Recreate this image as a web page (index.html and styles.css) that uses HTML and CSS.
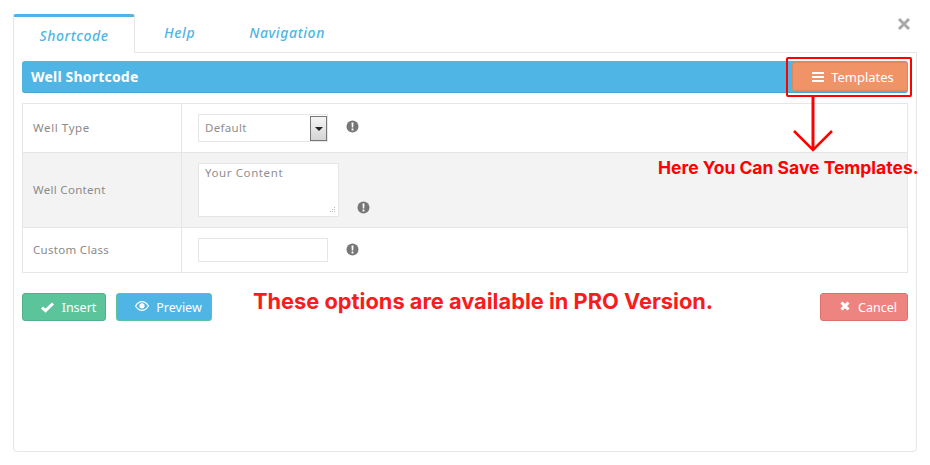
FILE: index.html
```html
<!DOCTYPE html>
<html lang="en">
<head>
<meta charset="utf-8">
<title>Well Shortcode</title>
<link rel="stylesheet" href="styles.css">
</head>
<body>
<div class="modal">
  <nav class="tabs">
    <a class="tab active">Shortcode</a>
    <a class="tab help">Help</a>
    <a class="tab nav">Navigation</a>
  </nav>
  <span class="close" aria-label="Close"><svg width="14" height="14" viewBox="0 0 14 14"><path d="M2 2L12 12M12 2L2 12" stroke="#a9a9a9" stroke-width="3"/></svg></span>
  <section class="panel">
    <header class="bar">
      <h1>Well Shortcode</h1>
      <button class="templates"><svg width="12" height="10" viewBox="0 0 12 10"><path d="M0 0h12v2H0zM0 4h12v2H0zM0 8h12v2H0z" fill="#fff"/></svg>Templates</button>
    </header>
    <div class="form">
      <div class="row r1">
        <label>Well Type</label>
        <div class="field">
          <div class="select"><span>Default</span><i class="arrow"></i></div>
          <svg class="info" width="13" height="13" viewBox="0 0 13 13"><circle cx="6.5" cy="6.5" r="6" fill="#777"/><path d="M5.5 2.5h2l-.3 5h-1.4zM5.6 8.6h1.8v1.8H5.6z" fill="#fff"/></svg>
        </div>
      </div>
      <div class="row r2">
        <label>Well Content</label>
        <div class="field">
          <div class="textarea">Your Content<svg class="grip" width="8" height="8" viewBox="0 0 8 8"><path d="M6 1h1v1H6zM4 3h1v1H4zM6 3h1v1H6zM2 5h1v1H2zM4 5h1v1H4zM6 5h1v1H6z" fill="#bbb"/></svg></div>
          <svg class="info low" width="13" height="13" viewBox="0 0 13 13"><circle cx="6.5" cy="6.5" r="6" fill="#777"/><path d="M5.5 2.5h2l-.3 5h-1.4zM5.6 8.6h1.8v1.8H5.6z" fill="#fff"/></svg>
        </div>
      </div>
      <div class="row r3">
        <label>Custom Class</label>
        <div class="field">
          <div class="input"></div>
          <svg class="info" width="13" height="13" viewBox="0 0 13 13"><circle cx="6.5" cy="6.5" r="6" fill="#777"/><path d="M5.5 2.5h2l-.3 5h-1.4zM5.6 8.6h1.8v1.8H5.6z" fill="#fff"/></svg>
        </div>
      </div>
    </div>
    <footer class="actions">
      <button class="btn insert"><svg width="13" height="11" viewBox="0 0 13 11"><path d="M1 5.500l3.500 3.200L12 1.500" fill="none" stroke="#fff" stroke-width="3"/></svg>Insert</button>
      <button class="btn preview"><svg class="up" width="14" height="10" viewBox="0 0 14 10"><path d="M.5 5C2.500 1.800 4.600.6 7 .6S11.500 1.800 13.500 5C11.500 8.200 9.400 9.400 7 9.400S2.500 8.200.5 5z" fill="none" stroke="#fff" stroke-width="1.200"/><circle cx="7" cy="4.800" r="2.600" fill="#fff"/></svg>Preview</button>
      <button class="btn cancel"><svg class="up" width="10" height="10" viewBox="0 0 10 10"><path d="M1.500 1.500L8.500 8.500M8.500 1.500L1.500 8.500" stroke="#fff" stroke-width="3"/></svg>Cancel</button>
    </footer>
  </section>
  <div class="callout-box"></div>
  <svg class="callout-arrow" width="42" height="58" viewBox="0 0 42 58"><path d="M21 0V54" fill="none" stroke="#f00" stroke-width="3"/><path d="M2 35L21 54L40 35" fill="none" stroke="#f00" stroke-width="2.500"/></svg>
  <p class="note save">Here You Can Save Templates.</p>
  <p class="note pro">These options are available in PRO Version.</p>
</div>
</body>
</html>
```
FILE: styles.css
```css
* { box-sizing: border-box; }
html, body { margin: 0; height: 465px; overflow: hidden; background: #fff; }
body { font-family: "Noto Sans", "DejaVu Sans", sans-serif; color: #8a8a8a; }
.modal { position: relative; width: 930px; height: 465px; padding: 14px 13px 14px; }
.tabs { display: flex; height: 39px; position: relative; z-index: 1; }
.tab { font-family: "Noto Sans", sans-serif; font-style: italic; font-weight: 500; font-size: 14px; letter-spacing: .6px; color: #4fb5e5; }
.tab.active { width: 122px; height: 39px; background: #fff; border: 1px solid #e6e6e6; border-top: 3px solid #4fb5e5; border-bottom: 0; border-radius: 3px 3px 0 0; padding-top: 9px; text-align: center; }
.tab.help { margin-left: 29px; padding-top: 9px; }
.tab.nav { margin-left: 54px; padding-top: 9px; }
.close { position: absolute; left: 897px; top: 17px; line-height: 0; }
.panel { height: 400px; margin-top: -1px; border: 1px solid #e6e6e6; border-radius: 0 0 4px 4px; padding: 8px 8px 0; }
.bar { height: 32px; background: #4fb5e5; border-radius: 3px; display: flex; justify-content: space-between; align-items: center; padding-left: 9px; border-bottom: 1px solid #47a5d2; }
.bar h1 { margin: 0; font-family: "Noto Sans", sans-serif; font-size: 14px; font-weight: 700; letter-spacing: .2px; color: #fff; }
.templates { width: 116px; height: 29px; background: #f09468; border: 1px solid #e2865a; border-radius: 2px; display: flex; align-items: center; justify-content: center; gap: 7px; color: #fff; font-family: "Noto Sans", sans-serif; font-size: 13px; padding: 0 0 0 6px; }
.form { margin-top: 10px; border: 1px solid #e6e6e6; }
.row { display: flex; border-bottom: 1px solid #e6e6e6; }
.row:last-child { border-bottom: 0; }
.r1 { height: 49px; }
.r2 { height: 75px; background: #f3f3f3; }
.r3 { height: 44px; }
.row label { width: 159px; border-right: 1px solid #e6e6e6; display: flex; align-items: center; padding: 0 0 2px 10px; font-family: "Noto Sans", sans-serif; font-size: 11.500px; letter-spacing: .3px; color: #8a8a8a; }
.r1 label { letter-spacing: .6px; }
.field { flex: 1; display: flex; align-items: center; padding-left: 16px; }
.select { width: 130px; height: 28px; border: 1px solid #e6e6e6; background: #fff; display: flex; align-items: center; justify-content: space-between; padding: 0 0 0 6px; font-family: "Noto Sans", sans-serif; font-size: 11.500px; letter-spacing: .3px; color: #8f8f8f; }
.select span { margin-top: -2px; }
.arrow { width: 17px; height: 25px; border: 1px solid #777; background: linear-gradient(#f5f5f5, #d4d4d4); position: relative; }
.arrow::after { content: ""; position: absolute; left: 4px; top: 10px; border: 4px solid transparent; border-top: 4px solid #222; border-bottom: 0; }
.textarea { position: relative; width: 141px; height: 54px; border: 1px solid #e6e6e6; background: #fff; padding: 1px 6px; font-family: "Noto Sans", sans-serif; font-size: 11.500px; letter-spacing: .6px; color: #8f8f8f; }
.grip { position: absolute; right: 2px; bottom: 2px; }
.input { width: 130px; height: 24px; border: 1px solid #e6e6e6; background: #fff; }
.info { margin-left: 18px; margin-top: -2px; }
.r1 .info { margin-top: -4px; }
.info.low { margin-top: 0; align-self: flex-end; margin-bottom: 13px; }
.actions { display: flex; margin-top: 20px; gap: 10px; }
.btn { height: 28px; border-radius: 3px; color: #fff; font-family: "Noto Sans", sans-serif; font-size: 12.500px; display: flex; align-items: center; justify-content: center; gap: 8px; padding: 0; }
.up { margin-top: -3px; }
.insert { width: 84px; background: #5cc49b; border: 1px solid #52b18b; padding-left: 9px; }
.preview { width: 96px; background: #4fb5e5; border: 1px solid #5cc49b; padding-left: 9px; gap: 7px; }
.cancel { width: 88px; margin-left: auto; background: #ee8480; border: 1px solid #de6f6b; padding-left: 9px; }
.callout-box { position: absolute; left: 786px; top: 57px; width: 126px; height: 40px; border: 2px solid #f00; border-radius: 2px; }
.callout-arrow { position: absolute; left: 792px; top: 96px; }
.note { position: absolute; margin: 0; font-family: "Inter", "Liberation Sans", sans-serif; font-weight: 700; color: #f00; white-space: nowrap; }
.save { left: 658px; top: 156px; font-size: 17.500px; line-height: 24px; }
.pro { left: 253px; top: 287px; font-size: 21.800px; line-height: 28px; color: #f81c1c; }
```
